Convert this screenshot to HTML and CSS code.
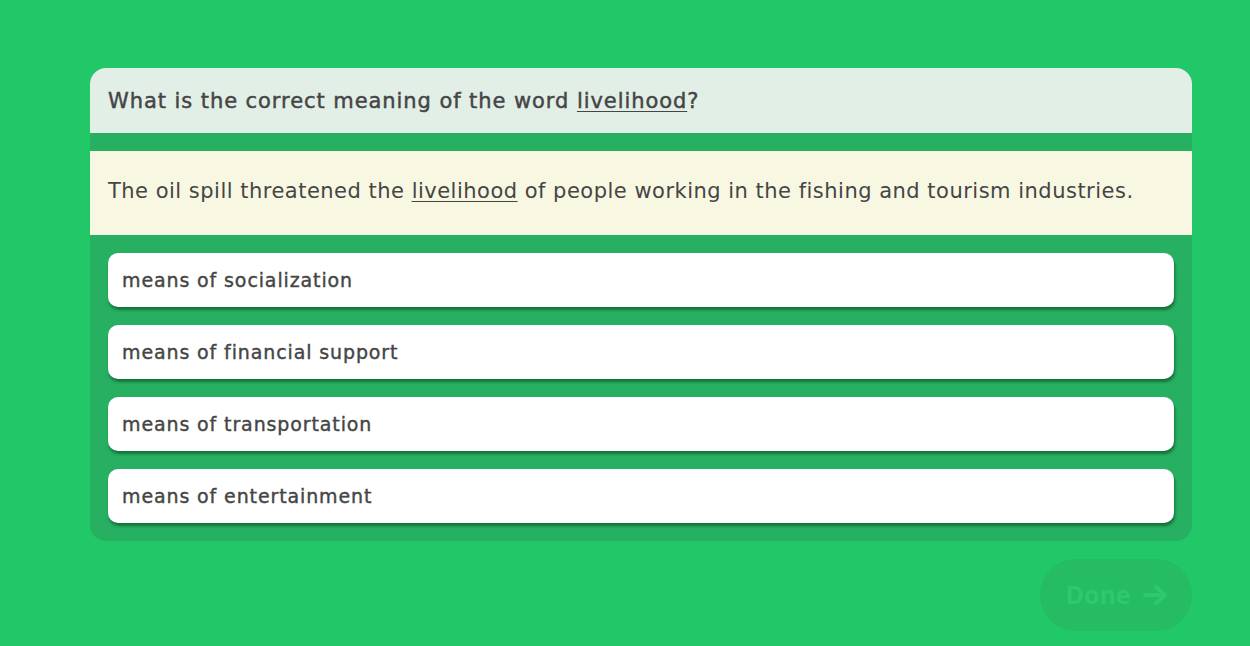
FILE: index.html
```html
<!DOCTYPE html>
<html>
<head>
<meta charset="utf-8">
<link rel="stylesheet" href="styles.css">
</head>
<body>
<div class="page">
  <div class="card">
    <div class="question"><span>What is the correct meaning of the word <u>livelihood</u>?</span></div>
    <div class="sentence"><span>The oil spill threatened the <u>livelihood</u> of people working in the fishing and tourism industries.</span></div>
    <div class="options">
      <div class="option"><span>means of socialization</span></div>
      <div class="option"><span>means of financial support</span></div>
      <div class="option"><span>means of transportation</span></div>
      <div class="option"><span>means of entertainment</span></div>
    </div>
  </div>
  <div class="actions">
    <button class="done"><span>Done</span><svg width="26" height="22" viewBox="0 0 26 22"><path d="M2 11 H22 M13 3 L22 11 L13 19" fill="none" stroke="currentColor" stroke-width="4" stroke-linecap="round" stroke-linejoin="round"/></svg></button>
  </div>
</div>
</body>
</html>
```
FILE: styles.css
```css
* { box-sizing: border-box; }
html, body { margin: 0; padding: 0; }
body {
  background: #22c768;
  width: 1250px;
  height: 646px;
  overflow: hidden;
  font-family: "DejaVu Sans", "Inter", sans-serif;
  color: #454545;
}
.page {
  padding: 68px 58px 0 90px;
}
.card {
  width: 1102px;
  background: #27b062;
  border-radius: 16px;
  overflow: hidden;
}
.question {
  background: #e1efe6;
  height: 65px;
  padding: 1px 18px 0;
  display: flex;
  align-items: center;
  font-size: 21px;
  font-weight: 400;
  letter-spacing: 0.93px;
  -webkit-text-stroke: 0.45px currentColor;
  white-space: nowrap;
}
.question u, .sentence u {
  text-underline-offset: 3px;
  text-decoration-thickness: 1px;
}
.sentence {
  margin-top: 18px;
  background: #f8f7e2;
  height: 84px;
  padding: 0 18px 4px;
  display: flex;
  align-items: center;
  font-size: 21px;
  font-weight: 400;
  letter-spacing: 0.49px;
  white-space: nowrap;
}
.options {
  padding: 18px;
  display: flex;
  flex-direction: column;
  gap: 18px;
}
.option {
  background: #fff;
  height: 54px;
  border-radius: 10px;
  padding: 0 14px 1px;
  display: flex;
  align-items: center;
  font-size: 19px;
  font-weight: 400;
  letter-spacing: 0.88px;
  -webkit-text-stroke: 0.4px currentColor;
  box-shadow: 1px 3px 3px rgba(0, 60, 20, 0.55);
}
.actions {
  display: flex;
  justify-content: flex-end;
  width: 1102px;
  margin-top: 18px;
}
.done {
  width: 152px;
  height: 72px;
  border: none;
  border-radius: 36px;
  background: #25bc63;
  color: #2fc86e;
  font-family: "Open Sans", sans-serif;
  font-weight: 700;
  font-size: 25px;
  display: flex;
  align-items: center;
  justify-content: center;
  gap: 12px;
  padding: 0 0 2px 2px;
}
.done svg { margin-top: 2px; }
```
